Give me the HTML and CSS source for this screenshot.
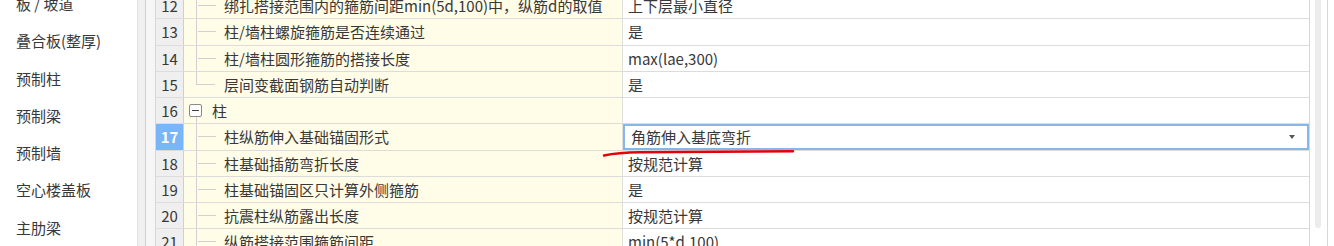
FILE: index.html
```html
<!DOCTYPE html>
<html lang="zh">
<head>
<meta charset="utf-8">
<link rel="stylesheet" href="styles.css">
</head>
<body>
<div class="app">
  <aside class="sidebar">
    <div class="side-item">板 / 坡道</div>
    <div class="side-item">叠合板(整厚)</div>
    <div class="side-item">预制柱</div>
    <div class="side-item">预制梁</div>
    <div class="side-item">预制墙</div>
    <div class="side-item">空心楼盖板</div>
    <div class="side-item">主肋梁</div>
  </aside>
  <div class="splitter"><div class="split-a"></div><div class="split-b"></div></div>
  <main class="grid">
    <div class="row"><div class="num">12</div><div class="name child"><span class="tree vline"></span>绑扎搭接范围内的箍筋间距min(5d,100)中，纵筋d的取值</div><div class="val">上下层最小直径</div></div>
    <div class="row"><div class="num">13</div><div class="name child"><span class="tree vline"></span>柱/墙柱螺旋箍筋是否连续通过</div><div class="val">是</div></div>
    <div class="row"><div class="num">14</div><div class="name child"><span class="tree vline"></span>柱/墙柱圆形箍筋的搭接长度</div><div class="val">max(lae,300)</div></div>
    <div class="row"><div class="num">15</div><div class="name child"><span class="tree last"></span>层间变截面钢筋自动判断</div><div class="val">是</div></div>
    <div class="row"><div class="num">16</div><div class="name group"><span class="toggle"></span>柱</div><div class="val"></div></div>
    <div class="row"><div class="num sel">17</div><div class="name child"><span class="tree vline"></span>柱纵筋伸入基础锚固形式</div><div class="val edit"><span>角筋伸入基底弯折</span><span class="caret"></span></div></div>
    <div class="row"><div class="num">18</div><div class="name child"><span class="tree vline"></span>柱基础插筋弯折长度</div><div class="val">按规范计算</div></div>
    <div class="row"><div class="num">19</div><div class="name child"><span class="tree vline"></span>柱基础锚固区只计算外侧箍筋</div><div class="val">是</div></div>
    <div class="row"><div class="num">20</div><div class="name child"><span class="tree vline"></span>抗震柱纵筋露出长度</div><div class="val">按规范计算</div></div>
    <div class="row"><div class="num">21</div><div class="name child"><span class="tree vline"></span>纵筋搭接范围箍筋间距</div><div class="val">min(5*d,100)</div></div>
  </main>
  <div class="vscroll"><div class="thumb"></div><div class="vscroll-edge"></div></div>
</div>
<svg class="mark" width="1334" height="246" viewBox="0 0 1334 246"><path d="M604 155.5 Q 618 152.5 640 152.3 L 793 151.2" fill="none" stroke="#e3000b" stroke-width="2.5" stroke-linecap="round"/></svg>
</body>
</html>
```
FILE: styles.css
```css
* { box-sizing: border-box; }
html, body { margin: 0; padding: 0; }
body {
  width: 1334px;
  height: 246px;
  overflow: hidden;
  background: #fff;
  font-family: "Noto Sans CJK SC", "Noto Sans", sans-serif;
  font-size: 15px;
  color: #383838;
  position: relative;
}
.app { display: flex; height: 246px; }
.sidebar {
  width: 137px;
  flex: none;
  padding-left: 16px;
  margin-top: -15px;
}
.side-item {
  height: 37.3px;
  line-height: 37.3px;
  white-space: nowrap;
  color: #383838;
}
.splitter { width: 18px; flex: none; display: flex; }
.split-a { width: 9px; background: #f0f0f0; border-left: 1px solid #e2e2e2; border-right: 1px solid #cfcfcf; }
.split-b { width: 9px; background: #f6f6f6; }
.grid {
  width: 1155px;
  flex: none;
  margin-top: -7px;
  border-left: 1px solid #d6d6d6;
  border-right: 1px solid #d6d6d6;
}
.row {
  display: flex;
  height: 26.25px;
  border-bottom: 1px solid #dcdcdc;
}
.num {
  width: 28px;
  flex: none;
  background: #efefef;
  border-right: 1px solid #cfcfcf;
  text-align: center;
  line-height: 25px;
  color: #383838;
}
.num.sel { background: #79b5f7; color: #fff; font-weight: bold; }
.name {
  width: 439px;
  flex: none;
  background: #fffce8;
  border-right: 1px solid #dedede;
  position: relative;
  line-height: 25px;
  white-space: nowrap;
  overflow: hidden;
}
.name.child { padding-left: 40px; }
.name.group { padding-left: 28px; }
.tree { position: absolute; left: 12px; top: 0; width: 19px; height: 100%; }
.tree.vline { border-left: 1px solid #d0d0d0; }
.tree::after {
  content: "";
  position: absolute;
  left: 1px;
  top: 12px;
  width: 18px;
  border-top: 1px solid #d0d0d0;
}
.tree.last::before {
  content: "";
  position: absolute;
  left: 0;
  top: 0;
  height: 13px;
  border-left: 1px solid #d0d0d0;
}
.toggle {
  position: absolute;
  left: 5px;
  top: 6px;
  width: 13px;
  height: 13px;
  border: 1px solid #8a8a8a;
  border-radius: 2px;
  background: #fff;
}
.toggle::before {
  content: "";
  position: absolute;
  left: 2px;
  top: 5px;
  width: 7px;
  border-top: 1px solid #444;
}
.toggle::after {
  content: "";
  position: absolute;
  left: 6px;
  top: 12px;
  height: 14px;
  border-left: 1px solid #d0d0d0;
}
.val {
  flex: 1;
  background: #fff;
  padding-left: 5px;
  line-height: 25px;
  white-space: nowrap;
}
.val.edit {
  border: 2px solid #86b6ea;
  padding-left: 6px;
  line-height: 22px;
  display: flex;
  justify-content: space-between;
  align-items: center;
  padding-right: 12px;
}
.caret {
  width: 0;
  height: 0;
  border-left: 3.5px solid transparent;
  border-right: 3.5px solid transparent;
  border-top: 4px solid #555;
}
.vscroll { width: 25px; flex: none; display: flex; padding-left: 5px; }
.thumb {
  width: 6px;
  height: 228px;
  background: #ececec;
  border-radius: 0 0 3px 3px;
}
.vscroll-edge { width: 1px; margin-left: 6px; background: #d8d8d8; }
.mark { position: absolute; left: 0; top: 0; pointer-events: none; }
```
